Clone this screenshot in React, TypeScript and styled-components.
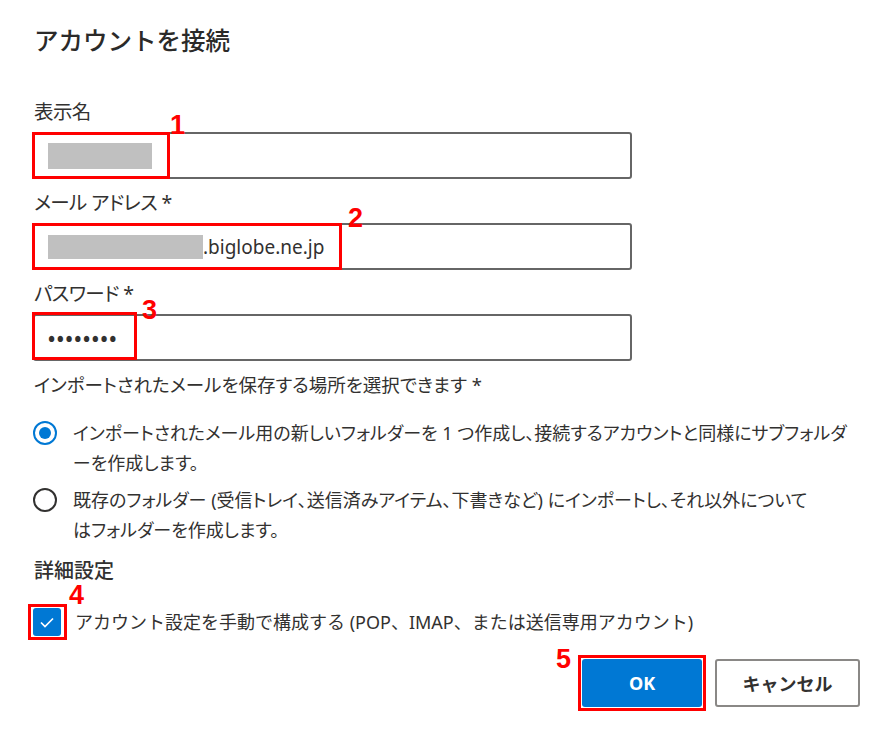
import React from 'react';
import styled, { createGlobalStyle } from 'styled-components';

const GlobalStyle = createGlobalStyle`
  body {
    margin: 0;
    background: #ffffff;
    color: #323130;
    font-family: "Segoe UI", "Noto Sans", "Noto Sans CJK JP", sans-serif;
  }
`;

const Dialog = styled.div`
  width: 896px;
  height: 750px;
  box-sizing: border-box;
  padding: 24px 36px 0 33px;
  overflow: hidden;
`;

const Title = styled.h1`
  margin: 0 0 41px 1px;
  font-size: 24.5px;
  font-weight: 500;
  line-height: 34px;
  color: #2b2a29;
`;

const Field = styled.div`
  margin-bottom: 11px;
`;

const Label = styled.div`
  margin: 0 0 7px 1px;
  font-size: 19.5px;
  line-height: 26px;
  letter-spacing: -0.6px;
  font-feature-settings: "palt";
`;

const InputWrap = styled.div`
  position: relative;
  width: 599px;
`;

const TextBox = styled.div`
  height: 47px;
  box-sizing: border-box;
  border: 2px solid #666666;
  border-radius: 3px;
  padding-left: 13px;
  display: flex;
  align-items: center;
  font-size: 19px;
  color: #323130;
`;

const Redacted = styled.span<{ $w: number; $h: number }>`
  display: inline-block;
  width: ${p => p.$w}px;
  height: ${p => p.$h}px;
  background: #c0c0c0;
`;

const Dots = styled.span`
  font-size: 19px;
  letter-spacing: 1.6px;
  font-weight: 700;
  margin-top: 2px;
`;

const Highlight = styled.div<{ $l: number; $t: number; $w: number; $h: number }>`
  position: absolute;
  left: ${p => p.$l}px;
  top: ${p => p.$t}px;
  width: ${p => p.$w}px;
  height: ${p => p.$h}px;
  box-sizing: border-box;
  border: 3px solid #ff0000;
  pointer-events: none;
`;

const Marker = styled.div<{ $l: number; $t: number }>`
  position: absolute;
  left: ${p => p.$l}px;
  top: ${p => p.$t}px;
  font-family: "Liberation Sans", Arial, sans-serif;
  font-weight: 700;
  font-size: 27px;
  line-height: 20px;
  color: #ff0000;
`;

const SectionLabel = styled.div`
  margin: 10px 0 20px 1px;
  font-size: 18.5px;
  line-height: 26px;
  font-feature-settings: "palt";
`;

const RadioRow = styled.div`
  display: flex;
  align-items: flex-start;
  gap: 16px;
  margin-bottom: 7px;
`;

const RadioCircle = styled.span<{ $checked?: boolean }>`
  flex: none;
  width: 24px;
  height: 24px;
  margin-top: 3px;
  box-sizing: border-box;
  border-radius: 50%;
  border: 2px solid ${p => (p.$checked ? '#0078d4' : '#323130')};
  display: flex;
  align-items: center;
  justify-content: center;

  &::after {
    content: '';
    display: ${p => (p.$checked ? 'block' : 'none')};
    width: 12px;
    height: 12px;
    border-radius: 50%;
    background: #0078d4;
  }
`;

const RadioText = styled.div`
  font-size: 18px;
  line-height: 30px;
  font-feature-settings: "palt";
  white-space: nowrap;
`;

const Heading = styled.div`
  margin: 15px 0 26px 1px;
  font-size: 20px;
  font-weight: 500;
  line-height: 22px;
  color: #323130;
`;

const CheckRow = styled.div`
  position: relative;
  display: flex;
  align-items: center;
  gap: 14px;
  height: 28px;
`;

const CheckBox = styled.span`
  flex: none;
  width: 28px;
  height: 28px;
  border-radius: 3px;
  background: #0078d4;
  display: flex;
  align-items: center;
  justify-content: center;
`;

const CheckText = styled.span`
  font-size: 18px;
  line-height: 28px;
`;

const ButtonRow = styled.div`
  display: flex;
  justify-content: flex-end;
  gap: 13px;
  width: 827px;
  margin-top: 23px;
`;

const ButtonWrap = styled.div`
  position: relative;
`;

const Button = styled.button<{ $primary?: boolean }>`
  height: 48px;
  box-sizing: border-box;
  border-radius: 3px;
  font-family: "Segoe UI", "Noto Sans", "Noto Sans CJK JP", sans-serif;
  font-size: 18px;
  cursor: pointer;
  ${p =>
    p.$primary
      ? `
    width: 120px;
    background: #0078d4;
    color: #ffffff;
    border: none;
    font-weight: 700;
  `
      : `
    width: 145px;
    background: #ffffff;
    color: #323130;
    border: 2px solid #8a8886;
    font-weight: 600;
  `}
`;

const App: React.FC = () => {
  return (
    <>
      <GlobalStyle />
      <Dialog>
        <Title>アカウントを接続</Title>

        <Field>
          <Label>表示名</Label>
          <InputWrap>
            <TextBox>
              <Redacted $w={104} $h={26} />
            </TextBox>
            <Highlight $l={-1} $t={0} $w={138} $h={47} />
            <Marker $l={137} $t={-17}>1</Marker>
          </InputWrap>
        </Field>

        <Field>
          <Label>メール アドレス *</Label>
          <InputWrap>
            <TextBox>
              <Redacted $w={155} $h={24} />
              <span>.biglobe.ne.jp</span>
            </TextBox>
            <Highlight $l={-1} $t={0} $w={310} $h={47} />
            <Marker $l={315} $t={-15}>2</Marker>
          </InputWrap>
        </Field>

        <Field>
          <Label>パスワード *</Label>
          <InputWrap>
            <TextBox>
              <Dots>••••••••</Dots>
            </TextBox>
            <Highlight $l={-1} $t={-2} $w={105} $h={48} />
            <Marker $l={109} $t={-14}>3</Marker>
          </InputWrap>
        </Field>

        <SectionLabel>インポートされたメールを保存する場所を選択できます *</SectionLabel>

        <RadioRow>
          <RadioCircle $checked />
          <RadioText>
            インポートされたメール用の新しいフォルダーを 1 つ作成し、接続するアカウントと同様にサブフォルダ
            <br />
            ーを作成します。
          </RadioText>
        </RadioRow>
        <RadioRow>
          <RadioCircle />
          <RadioText>
            既存のフォルダー (受信トレイ、送信済みアイテム、下書きなど) にインポートし、それ以外について
            <br />
            はフォルダーを作成します。
          </RadioText>
        </RadioRow>

        <Heading>詳細設定</Heading>

        <CheckRow>
          <CheckBox>
            <svg width="20" height="20" viewBox="0 0 20 20" fill="none">
              <polyline points="4,10.5 8,14.5 16,6.5" stroke="#ffffff" strokeWidth="1.7" />
            </svg>
          </CheckBox>
          <CheckText>アカウント設定を手動で構成する (POP、IMAP、または送信専用アカウント)</CheckText>
          <Highlight $l={-5} $t={-4} $w={39} $h={36} />
          <Marker $l={36} $t={-23}>4</Marker>
        </CheckRow>

        <ButtonRow>
          <ButtonWrap>
            <Button $primary>OK</Button>
            <Highlight $l={-4} $t={-4} $w={128} $h={56} />
            <Marker $l={-26} $t={-10}>5</Marker>
          </ButtonWrap>
          <ButtonWrap>
            <Button>キャンセル</Button>
          </ButtonWrap>
        </ButtonRow>
      </Dialog>
    </>
  );
};

export default App;
